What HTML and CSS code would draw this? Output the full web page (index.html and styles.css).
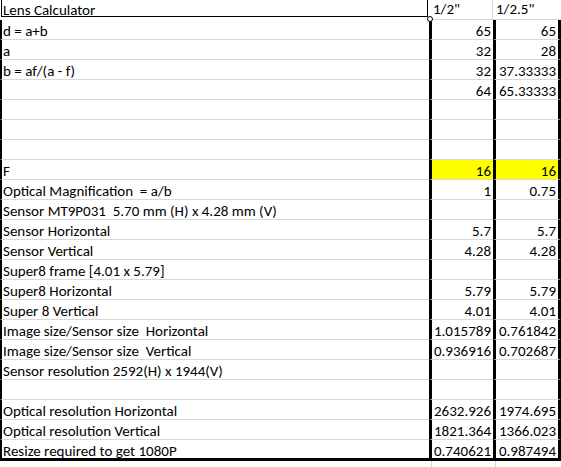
FILE: index.html
```html
<!DOCTYPE html>
<html>
<head>
<meta charset="utf-8">
<title>Lens Calculator</title>
<link rel="stylesheet" href="styles.css">
</head>
<body>
<div class="sheet">
  <div class="row head">
    <div class="hcell a"><div class="title">Lens Calculator</div><span class="handle"></span></div>
    <div class="hcell b">1/2"</div>
    <div class="hcell c">1/2.5"</div>
  </div>
  <div class="row"><div class="cell a">d = a+b</div><div class="cell b">65</div><div class="cell c">65</div></div>
  <div class="row"><div class="cell a">a</div><div class="cell b">32</div><div class="cell c">28</div></div>
  <div class="row"><div class="cell a">b = af/(a - f)</div><div class="cell b">32</div><div class="cell c">37.33333</div></div>
  <div class="row"><div class="cell a"></div><div class="cell b">64</div><div class="cell c">65.33333</div></div>
  <div class="row"><div class="cell a"></div><div class="cell b"></div><div class="cell c"></div></div>
  <div class="row"><div class="cell a"></div><div class="cell b"></div><div class="cell c"></div></div>
  <div class="row"><div class="cell a"></div><div class="cell b"></div><div class="cell c"></div></div>
  <div class="row"><div class="cell a">F</div><div class="cell b hl">16</div><div class="cell c hl">16</div></div>
  <div class="row"><div class="cell a">Optical Magnification  = a/b</div><div class="cell b">1</div><div class="cell c">0.75</div></div>
  <div class="row"><div class="cell a">Sensor MT9P031  5.70 mm (H) x 4.28 mm (V)</div><div class="cell b"></div><div class="cell c"></div></div>
  <div class="row"><div class="cell a">Sensor Horizontal</div><div class="cell b">5.7</div><div class="cell c">5.7</div></div>
  <div class="row"><div class="cell a">Sensor Vertical</div><div class="cell b">4.28</div><div class="cell c">4.28</div></div>
  <div class="row"><div class="cell a">Super8 frame [4.01 x 5.79]</div><div class="cell b"></div><div class="cell c"></div></div>
  <div class="row"><div class="cell a">Super8 Horizontal</div><div class="cell b">5.79</div><div class="cell c">5.79</div></div>
  <div class="row"><div class="cell a">Super 8 Vertical</div><div class="cell b">4.01</div><div class="cell c">4.01</div></div>
  <div class="row"><div class="cell a">Image size/Sensor size  Horizontal</div><div class="cell b">1.015789</div><div class="cell c">0.761842</div></div>
  <div class="row"><div class="cell a">Image size/Sensor size  Vertical</div><div class="cell b">0.936916</div><div class="cell c">0.702687</div></div>
  <div class="row"><div class="cell a">Sensor resolution 2592(H) x 1944(V)</div><div class="cell b"></div><div class="cell c"></div></div>
  <div class="row"><div class="cell a"></div><div class="cell b"></div><div class="cell c"></div></div>
  <div class="row"><div class="cell a">Optical resolution Horizontal</div><div class="cell b">2632.926</div><div class="cell c">1974.695</div></div>
  <div class="row"><div class="cell a">Optical resolution Vertical</div><div class="cell b">1821.364</div><div class="cell c">1366.023</div></div>
  <div class="row last"><div class="cell a">Resize required to get 1080P</div><div class="cell b">0.740621</div><div class="cell c">0.987494</div></div>
  <div class="row tail"><div class="tcell ta"></div><div class="tcell tb"></div><div class="tcell tc"></div></div>
</div>
</body>
</html>
```

FILE: styles.css
```css
html, body {
  margin: 0;
  padding: 0;
  background: #ffffff;
}

body {
  font-family: Carlito, Calibri, Lato, sans-serif;
  font-size: 15px;
  color: #000000;
  width: 561px;
  height: 467px;
  overflow: hidden;
}

.sheet {
  display: flex;
  flex-direction: column;
  width: 561px;
}

.row {
  display: flex;
  height: 20px;
}

.cell {
  box-sizing: border-box;
  height: 20px;
  padding-top: 2px;
  line-height: 18px;
  border-bottom: 1px solid #d9d9d9;
  white-space: pre;
}

.a {
  width: 429px;
}

.b {
  width: 64px;
}

.c {
  width: 68px;
}

.cell.a {
  border-left: 2px solid #000;
  padding-left: 1px;
}

.cell.b {
  border-left: 3px solid #000;
  text-align: right;
  padding-right: 2px;
}

.cell.c {
  border-left: 3px solid #000;
  border-right: 3px solid #000;
  text-align: right;
  padding-right: 2px;
}

.cell.hl {
  background: #ffff00;
}

.row.last {
  height: 21px;
}

.last .cell {
  height: 21px;
  border-bottom: 3px solid #000;
}

/* header row */
.hcell {
  box-sizing: border-box;
  height: 20px;
  white-space: pre;
}

.hcell.a {
  position: relative;
  padding-left: 1px;
}

.title {
  box-sizing: border-box;
  width: 427px;
  height: 17px;
  border-left: 1px solid #000;
  border-right: 1px solid #000;
  border-bottom: 1px solid #000;
  padding-left: 1px;
  line-height: 20px;
}

.handle {
  position: absolute;
  left: 427px;
  top: 16px;
  width: 4px;
  height: 4px;
  border: 1px solid #000;
  border-radius: 50%;
  background: #fff;
}

.hcell.b {
  padding-left: 4px;
  line-height: 18px;
  border-bottom: 1px solid #d9d9d9;
  border-right: 1px solid #d9d9d9;
}

.hcell.c {
  padding-left: 3px;
  line-height: 18px;
  border-bottom: 1px solid #d9d9d9;
}

/* partial row below the table */
.tail {
  height: 6px;
}

.tcell {
  box-sizing: border-box;
  height: 6px;
}

.ta {
  width: 431px;
}

.tb {
  width: 64px;
  border-left: 1px solid #d9d9d9;
}

.tc {
  width: 66px;
  border-left: 1px solid #d9d9d9;
}
```
